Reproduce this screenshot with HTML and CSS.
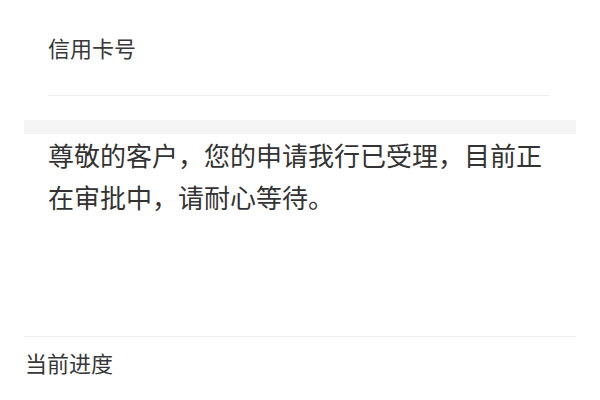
FILE: index.html
```html
<!DOCTYPE html>
<html lang="zh-CN">
<head>
<meta charset="utf-8">
<title>申请进度</title>
<link rel="stylesheet" href="styles.css">
</head>
<body>
<div class="page">
  <div class="field">
    <div class="field-label">信用卡号</div>
  </div>
  <div class="band"></div>
  <p class="msg">尊敬的客户，您的申请我行已受理，目前正在审批中，请耐心等待。</p>
  <div class="progress">
    <div class="progress-title">当前进度</div>
  </div>
</div>
</body>
</html>
```

FILE: styles.css
```css
html, body {
  margin: 0;
  padding: 0;
  background: #ffffff;
}

body {
  font-family: "Noto Sans CJK SC", "Noto Sans", sans-serif;
  color: #333333;
}

.page {
  padding: 0 24px;
}

.field {
  margin: 0 26px 0 24px;
  padding: 32px 0 33px;
  border-bottom: 1px solid #ededed;
}

.field-label {
  font-size: 22px;
  line-height: 30px;
  color: #383838;
}

.band {
  margin-top: 24px;
  height: 14px;
  background: #f5f5f5;
}

.msg {
  margin: 0 0 118px;
  padding: 0 24px;
  font-size: 26px;
  line-height: 42px;
  color: #333333;
}

.progress {
  border-top: 1px solid #ededed;
  padding: 10px 0 0 1px;
}

.progress-title {
  font-size: 22px;
  line-height: 30px;
  color: #383838;
}
```
